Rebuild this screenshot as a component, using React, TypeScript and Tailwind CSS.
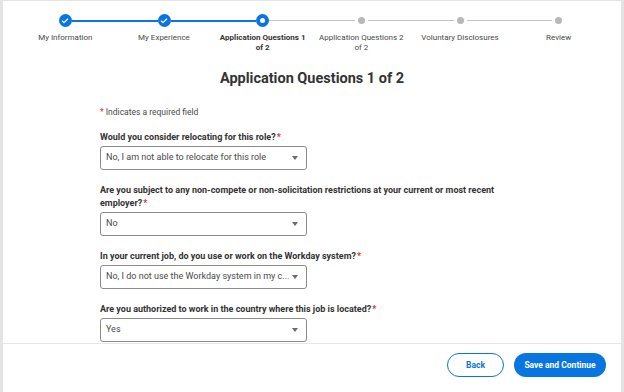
import { Check } from "lucide-react";

type StepState = "done" | "current" | "todo";

const steps: Array<{ label: string; state: StepState }> = [
  { label: "My Information", state: "done" },
  { label: "My Experience", state: "done" },
  { label: "Application Questions 1 of 2", state: "current" },
  { label: "Application Questions 2 of 2", state: "todo" },
  { label: "Voluntary Disclosures", state: "todo" },
  { label: "Review", state: "todo" },
];

const questions = [
  {
    label: "Would you consider relocating for this role?",
    value: "No, I am not able to relocate for this role",
  },
  {
    label:
      "Are you subject to any non-compete or non-solicitation restrictions at your current or most recent employer?",
    value: "No",
  },
  {
    label: "In your current job, do you use or work on the Workday system?",
    value: "No, I do not use the Workday system in my c...",
  },
  {
    label: "Are you authorized to work in the country where this job is located?",
    value: "Yes",
  },
];

function StepMarker({ state }: { state: StepState }) {
  if (state === "done") {
    return (
      <span className="flex size-[13px] items-center justify-center rounded-full bg-[#0875e1] text-white">
        <Check className="size-[8px]" strokeWidth={3.5} />
      </span>
    );
  }
  if (state === "current") {
    return (
      <span className="flex size-[13px] items-center justify-center rounded-full bg-[#0875e1]">
        <span className="size-[5px] rounded-full bg-white" />
      </span>
    );
  }
  return (
    <span className="flex size-[13px] items-center justify-center">
      <span className="size-[7px] rounded-full bg-[#b8b8b8]" />
    </span>
  );
}

function Stepper() {
  return (
    <ol className="grid grid-cols-6 px-[13px] pt-[13px]">
      {steps.map((step, i) => {
        const leftBlue = i > 0 && steps[i].state !== "todo";
        const rightBlue = i < steps.length - 1 && steps[i + 1].state !== "todo";
        return (
          <li key={step.label} className="flex flex-col items-center">
            <div className="flex h-[13px] w-full items-center">
              <span
                className={
                  i === 0
                    ? "flex-1"
                    : leftBlue
                      ? "h-[2px] flex-1 bg-[#0875e1]"
                      : "h-px flex-1 bg-[#c4c4c4]"
                }
              />
              <StepMarker state={step.state} />
              <span
                className={
                  i === steps.length - 1
                    ? "flex-1"
                    : rightBlue
                      ? "h-[2px] flex-1 bg-[#0875e1]"
                      : "h-px flex-1 bg-[#c4c4c4]"
                }
              />
            </div>
            <span
              className={
                step.state === "current"
                  ? "mt-[6px] w-[88px] text-center text-[8px] leading-[10px] font-bold text-[#333333]"
                  : "mt-[6px] w-[88px] text-center text-[8px] leading-[10px] text-[#494949]"
              }
            >
              {step.label}
            </span>
          </li>
        );
      })}
    </ol>
  );
}

function SelectBox({ value }: { value: string }) {
  return (
    <div className="mt-[2px] flex h-[24px] w-[207px] items-center justify-between rounded-[3px] border border-[#8a8a8a] pr-[8px] pl-[5px]">
      <span className="truncate text-[9px] text-[#494949]">{value}</span>
      <svg width="6" height="4" viewBox="0 0 6 4" className="shrink-0">
        <path d="M0 0h6L3 4z" fill="#6b6b6b" />
      </svg>
    </div>
  );
}

export default function App() {
  return (
    <div className="flex h-[392px] w-[624px] flex-col overflow-hidden border-t border-r-[3px] border-l-[3px] border-[#e4e4e4] bg-white font-['Roboto',sans-serif]">
      <main className="flex-1 overflow-hidden">
        <Stepper />

        <h1 className="mt-[18px] text-center text-[14.5px] leading-[16px] font-bold text-[#333333]">
          Application Questions 1 of 2
        </h1>

        <div className="ml-[97px]">
          <p className="mt-[20px] text-[8.5px] leading-[10px] text-[#494949]">
            <span className="text-[#de2e21]">*</span> Indicates a required field
          </p>

          {questions.map((q) => (
            <div key={q.label} className="mt-[14px]">
              <p className="w-[410px] text-[9px] leading-[13px] font-bold text-[#333333]">
                {q.label}
                <span className="ml-px text-[#de2e21]">*</span>
              </p>
              <SelectBox value={q.value} />
            </div>
          ))}
        </div>
      </main>

      <footer className="flex h-[49px] shrink-0 items-start justify-end gap-[10px] border-t border-[#e6e6e6] pt-[9px] pr-[15px]">
        <button className="h-[24px] w-[57px] rounded-full border border-[#0875e1] text-[8.5px] font-bold text-[#0875e1]">
          Back
        </button>
        <button className="h-[24px] w-[92px] rounded-full bg-[#0875e1] text-[8.5px] font-bold text-white">
          Save and Continue
        </button>
      </footer>
    </div>
  );
}
